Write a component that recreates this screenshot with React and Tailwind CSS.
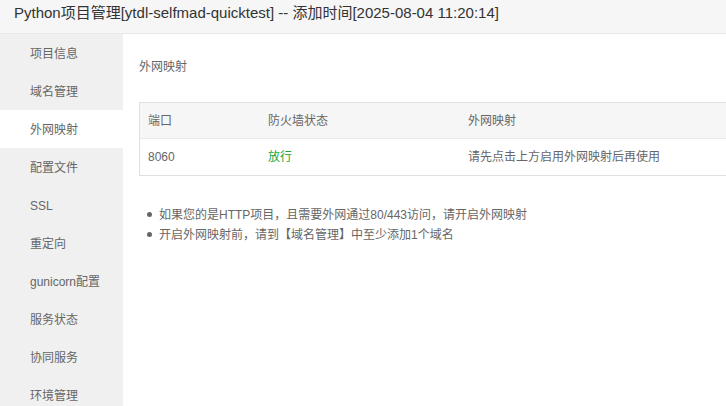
const MENU = [
  "项目信息",
  "域名管理",
  "外网映射",
  "配置文件",
  "SSL",
  "重定向",
  "gunicorn配置",
  "服务状态",
  "协同服务",
  "环境管理",
];

const ACTIVE = "外网映射";

export default function App() {
  return (
    <div
      className="w-[726px] h-[406px] overflow-hidden bg-white text-[#666]"
      style={{ fontFamily: '"Liberation Sans", "Noto Sans CJK SC", sans-serif' }}
    >
      {/* title */}
      <div className="h-[34px] bg-[#f6f6f6] border-b border-[#e8e8e8] pl-[14px] pt-[3px] text-[15px] leading-[20px] text-[#333]">
        Python项目管理[ytdl-selfmad-quicktest] -- 添加时间[2025-08-04 11:20:14]
      </div>

      <div className="flex h-[372px]">
        {/* side menu */}
        <div className="w-[123px] shrink-0 bg-[#f0f0f0]">
          {MENU.map((item) => (
            <div
              key={item}
              className={`h-[38px] flex items-center pl-[30px] pt-[2px] text-[12px] ${
                item === ACTIVE ? "bg-white" : ""
              }`}
            >
              {item}
            </div>
          ))}
        </div>

        {/* content */}
        <div className="flex-1 min-w-0 pl-[16px] pt-[24px] text-[12px]">
          <div className="h-[18px] flex items-center">外网映射</div>

          <div className="mt-[26px] w-[640px] border border-[#e0e0e0]">
            <div className="h-[36px] flex items-center bg-[#f6f6f6] border-b border-[#eaeaea]">
              <div className="w-[128px] pl-[8px]">端口</div>
              <div className="w-[200px]">防火墙状态</div>
              <div>外网映射</div>
            </div>
            <div className="h-[36px] flex items-center">
              <div className="w-[128px] pl-[8px]">8060</div>
              <div className="w-[200px] text-[#20a53a]">放行</div>
              <div>请先点击上方启用外网映射后再使用</div>
            </div>
          </div>

          <ul className="mt-[29px] ml-[8px] space-y-[1px]">
            <li className="h-[19px] flex items-center gap-[7px]">
              <span className="w-[5px] h-[5px] rounded-full bg-[#666]" />
              如果您的是HTTP项目，且需要外网通过80/443访问，请开启外网映射
            </li>
            <li className="h-[19px] flex items-center gap-[7px]">
              <span className="w-[5px] h-[5px] rounded-full bg-[#666]" />
              开启外网映射前，请到【域名管理】中至少添加1个域名
            </li>
          </ul>
        </div>
      </div>
    </div>
  );
}
